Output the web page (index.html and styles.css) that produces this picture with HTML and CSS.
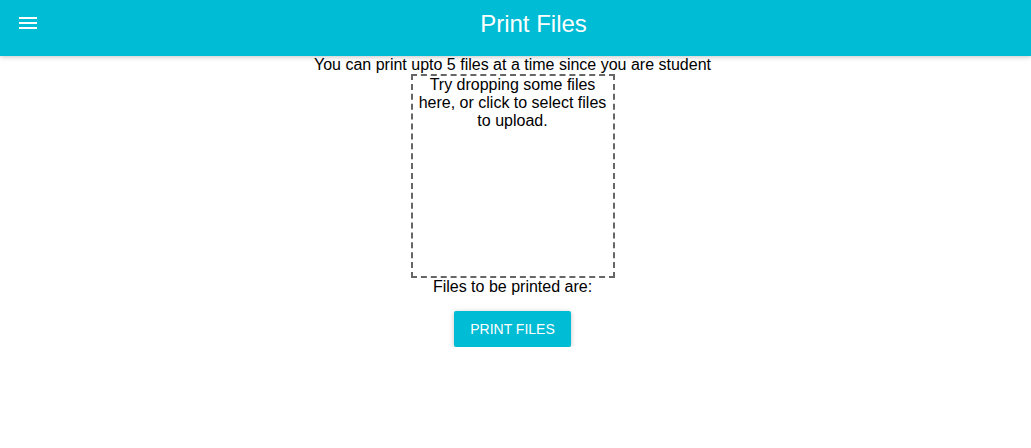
FILE: index.html
```html
<!DOCTYPE html>
<html>
<head>
<meta charset="utf-8">
<title>Print Files</title>
<link rel="stylesheet" href="styles.css">
</head>
<body>
<header class="appbar">
  <button class="menu-btn" aria-label="menu">
    <svg viewBox="0 0 24 24" width="24" height="24"><path fill="#fff" d="M3 18h18v-2H3v2zm0-5h18v-2H3v2zm0-7v2h18V6H3z"/></svg>
  </button>
  <h1 class="title">Print Files</h1>
</header>
<main class="content">
  <div class="note">You can print upto 5 files at a time since you are student</div>
  <div class="dropzone">Try dropping some files here, or click to select files to upload.</div>
  <div class="files-label">Files to be printed are:</div>
  <button class="print-btn">Print Files</button>
</main>
</body>
</html>
```
FILE: styles.css
```css
html, body {
  margin: 0;
  padding: 0;
  background: #fff;
  font-family: "Liberation Sans", Arial, sans-serif;
  color: #000;
}
.appbar {
  height: 56px;
  box-sizing: border-box;
  background: #00bcd4;
  display: flex;
  align-items: flex-start;
  padding: 0 16px 0 4px;
  box-shadow: 0 1px 6px rgba(0,0,0,0.12), 0 1px 4px rgba(0,0,0,0.12);
  position: relative;
  z-index: 1;
}
.menu-btn {
  width: 48px;
  height: 48px;
  padding: 11px 12px 13px;
  border: none;
  background: transparent;
  display: flex;
  align-items: flex-start;
  justify-content: center;
}
.menu-btn svg { display: block; }
.title {
  flex: 1;
  margin: 0;
  text-align: center;
  color: #fff;
  font-weight: 400;
  font-size: 24px;
  line-height: 48px;
}
.content {
  width: 1025px;
  display: flex;
  flex-direction: column;
  align-items: center;
  font-size: 16px;
  line-height: 18px;
}
.dropzone {
  width: 200px;
  height: 200px;
  border: 2px dashed #666;
  text-align: center;
}
.print-btn {
  margin-top: 15px;
  height: 36px;
  padding: 0 16px;
  min-width: 88px;
  border: none;
  border-radius: 2px;
  background: #00bcd4;
  color: #fff;
  font-family: "Liberation Sans", Arial, sans-serif;
  font-size: 14px;
  text-transform: uppercase;
  box-shadow: 0 1px 6px rgba(0,0,0,0.12), 0 1px 4px rgba(0,0,0,0.12);
}
```
